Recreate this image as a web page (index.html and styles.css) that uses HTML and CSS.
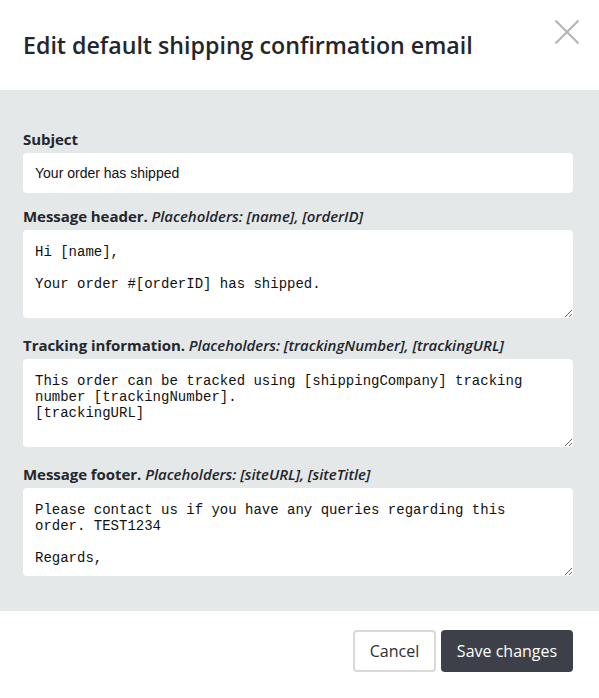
FILE: index.html
```html
<!DOCTYPE html>
<html>
<head>
<meta charset="utf-8">
<link rel="stylesheet" href="styles.css">
</head>
<body>
<div class="modal">
  <div class="modal-header">
    <h1 class="title">Edit default shipping confirmation email</h1>
    <button class="close" aria-label="Close">
      <svg width="24" height="24" viewBox="0 0 24 24"><path d="M0.5 0.5L23.5 23.5M23.5 0.5L0.5 23.5" stroke="#b4b4b4" stroke-width="2" fill="none"/></svg>
    </button>
  </div>
  <div class="modal-body">
    <div class="field field-subject">
      <label class="label">Subject</label>
      <input class="input" type="text" value="Your order has shipped">
    </div>
    <div class="field">
      <label class="label">Message header. <em>Placeholders: [name], [orderID]</em></label>
      <textarea class="textarea">Hi [name],

Your order #[orderID] has shipped.</textarea>
    </div>
    <div class="field">
      <label class="label">Tracking information. <em>Placeholders: [trackingNumber], [trackingURL]</em></label>
      <textarea class="textarea">This order can be tracked using [shippingCompany] tracking number [trackingNumber].
[trackingURL]</textarea>
    </div>
    <div class="field field-last">
      <label class="label">Message footer. <em>Placeholders: [siteURL], [siteTitle]</em></label>
      <textarea class="textarea">Please contact us if you have any queries regarding this order. TEST1234

Regards,</textarea>
    </div>
  </div>
  <div class="modal-footer">
    <button class="btn btn-cancel">Cancel</button>
    <button class="btn btn-save">Save changes</button>
  </div>
</div>
</body>
</html>
```
FILE: styles.css
```css
html, body {
  margin: 0;
  padding: 0;
  background: #ffffff;
}
body {
  font-family: "Open Sans", Lato, sans-serif;
  color: #23262b;
}
.modal {
  width: 599px;
  height: 698px;
  display: flex;
  flex-direction: column;
}
.modal-header {
  height: 90px;
  box-sizing: border-box;
  padding: 0 20px 0 23px;
  display: flex;
  align-items: flex-start;
  justify-content: space-between;
}
.title {
  margin: 30px 0 0;
  font-size: 23.2px;
  font-weight: 600;
  line-height: 30px;
  color: #23262b;
}
.close {
  margin-top: 20px;
  padding: 0;
  border: none;
  background: none;
  width: 24px;
  height: 24px;
}
.close svg { display: block; }
.modal-body {
  background: #e5e8e9;
  padding: 40px 26px 35px 23px;
  display: flex;
  flex-direction: column;
}
.field {
  display: flex;
  flex-direction: column;
  margin-bottom: 18px;
}
.field-subject { margin-bottom: 14px; }
.field-last { margin-bottom: 0; }
.label {
  font-size: 15px;
  font-weight: 700;
  line-height: 19px;
  margin-bottom: 4px;
  color: #23262b;
  letter-spacing: -0.05px;
}
.label em {
  font-style: italic;
  font-weight: 600;
}
.input {
  height: 40px;
  box-sizing: border-box;
  border: none;
  border-radius: 4px;
  background: #fff;
  padding: 0 12px;
  font-family: "Liberation Sans", Arial, sans-serif;
  font-size: 14px;
  color: #111;
}
.textarea {
  display: block;
  height: 88px;
  box-sizing: border-box;
  border: none;
  border-radius: 4px;
  background: #fff;
  padding: 14px 12px 12px;
  font-family: "Liberation Mono", monospace;
  font-size: 14px;
  line-height: 16px;
  color: #111;
  resize: vertical;
  overflow: hidden;
}
.modal-footer {
  flex: 1;
  display: flex;
  justify-content: flex-end;
  align-items: flex-start;
  gap: 5px;
  padding: 19px 26px 0 0;
}
.btn {
  height: 42px;
  box-sizing: border-box;
  border-radius: 4px;
  font-family: "Open Sans", Lato, sans-serif;
  font-size: 16px;
  padding: 0;
}
.btn-cancel {
  width: 83px;
  background: #fff;
  border: 2px solid #d9d9d9;
  color: #2b2e33;
}
.btn-save {
  width: 132px;
  background: #3d4049;
  border: none;
  color: #fff;
}
```
